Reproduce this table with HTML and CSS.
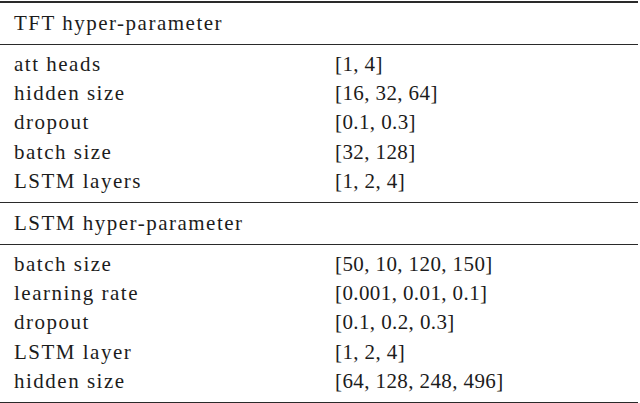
FILE: index.html
```html
<!DOCTYPE html>
<html>
<head>
<meta charset="utf-8">
<link rel="stylesheet" href="styles.css">
</head>
<body>
<div class="table">
  <div class="section-head">TFT hyper-parameter</div>
  <div class="section-body">
    <div class="row"><span class="name">att heads</span><span class="val">[1, 4]</span></div>
    <div class="row"><span class="name">hidden size</span><span class="val">[16, 32, 64]</span></div>
    <div class="row"><span class="name">dropout</span><span class="val">[0.1, 0.3]</span></div>
    <div class="row"><span class="name">batch size</span><span class="val">[32, 128]</span></div>
    <div class="row"><span class="name">LSTM layers</span><span class="val">[1, 2, 4]</span></div>
  </div>
  <div class="section-head">LSTM hyper-parameter</div>
  <div class="section-body last">
    <div class="row"><span class="name">batch size</span><span class="val">[50, 10, 120, 150]</span></div>
    <div class="row"><span class="name">learning rate</span><span class="val">[0.001, 0.01, 0.1]</span></div>
    <div class="row"><span class="name">dropout</span><span class="val">[0.1, 0.2, 0.3]</span></div>
    <div class="row"><span class="name">LSTM layer</span><span class="val">[1, 2, 4]</span></div>
    <div class="row"><span class="name">hidden size</span><span class="val">[64, 128, 248, 496]</span></div>
  </div>
</div>
</body>
</html>
```

FILE: styles.css
```css
html, body {
  margin: 0;
  padding: 0;
  background: #ffffff;
}
body {
  font-family: "Liberation Serif", "DejaVu Serif", serif;
  font-size: 21px;
  color: #1c1c1c;
}
.table {
  width: 638px;
  margin-top: 1px;
  border-top: 2px solid #2a2a2a;
}
.section-head {
  height: 41px;
  line-height: 41px;
  padding-left: 14px;
  letter-spacing: 1.5px;
  border-bottom: 1px solid #2a2a2a;
}
.section-body {
  padding: 5px 0 6px 0;
  border-bottom: 1px solid #2a2a2a;
}
.section-body.last {
  border-bottom: 2px solid #2a2a2a;
}
.row {
  display: grid;
  grid-template-columns: 335px 1fr;
  height: 29.2px;
  line-height: 29.2px;
}
.name {
  padding-left: 14px;
  letter-spacing: 1.5px;
}
.val {
  letter-spacing: 0.4px;
}
```
